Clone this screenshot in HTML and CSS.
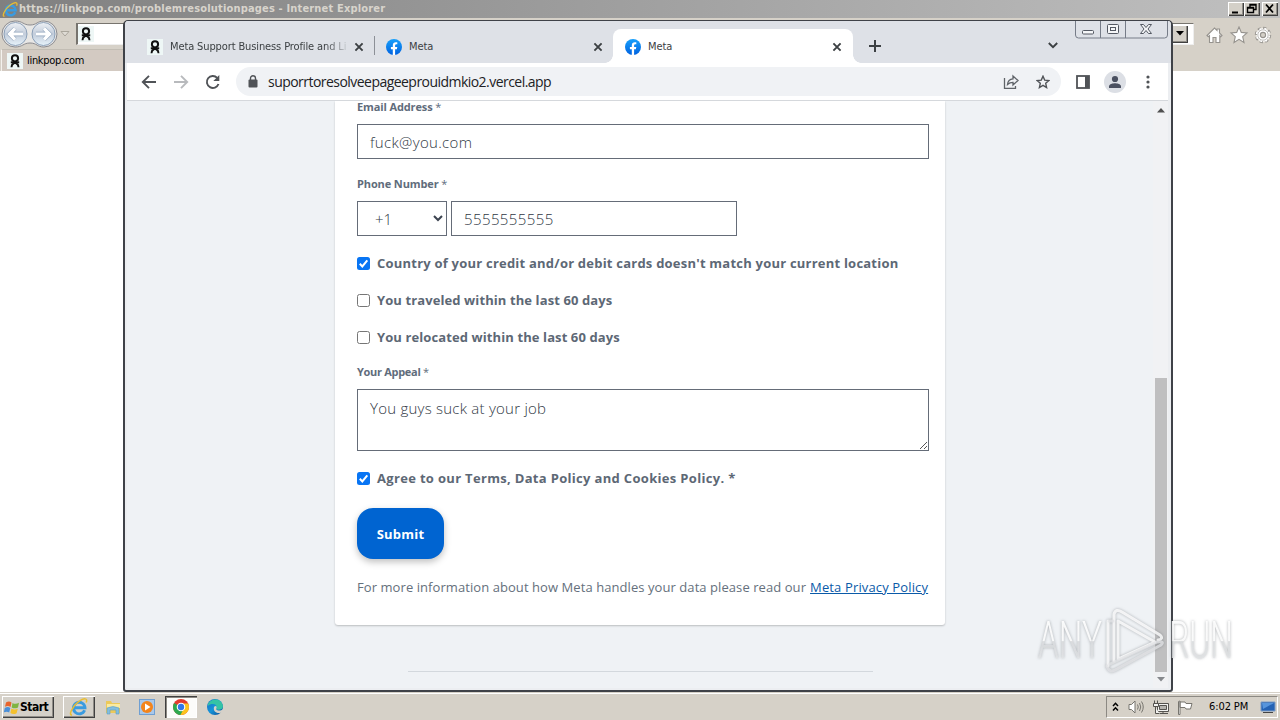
FILE: index.html
```html
<!DOCTYPE html>
<html lang="en">
<head>
<meta charset="utf-8">
<title>Desktop</title>
<link rel="stylesheet" href="styles.css">
</head>
<body>
<svg width="0" height="0" class="defs">
  <defs>
    <linearGradient id="fbg" x1="0" y1="0" x2="0" y2="1"><stop offset="0" stop-color="#18a0fb"/><stop offset="1" stop-color="#0062e0"/></linearGradient>
    <linearGradient id="orb" x1="0" y1="0" x2="0" y2="1"><stop offset="0" stop-color="#eef1f5"/><stop offset=".5" stop-color="#c3cddb"/><stop offset="1" stop-color="#e6f2fa"/></linearGradient>
    <linearGradient id="edge" x1="0" y1="0" x2="1" y2="1"><stop offset="0" stop-color="#1b6fc2"/><stop offset=".5" stop-color="#1593d8"/><stop offset="1" stop-color="#0c4a94"/></linearGradient>
    <symbol id="pop" viewBox="0 0 16 16"><rect width="16" height="16" fill="#eef7f6"/><circle cx="8" cy="5.300" r="3.100" fill="none" stroke="#111" stroke-width="2"/><path d="M3.800 9.300C7 9.300 11.500 10.300 11.500 14.300M12.200 9.300C9 9.300 4.500 10.300 4.500 14.300" fill="none" stroke="#111" stroke-width="1.900"/></symbol>
    <symbol id="fb" viewBox="0 0 16 16"><circle cx="8" cy="8" r="8" fill="url(#fbg)"/><path d="M6.800 16V10.300H4.900V8h1.900V6.500c0-2.100 1.200-3.200 3-3.200.8 0 1.500.1 1.500.1v1.900h-.9c-1 0-1.300.6-1.300 1.200V8h2.200l-.4 2.300H9.100V16z" fill="#fff"/></symbol>
    <symbol id="x" viewBox="0 0 10 10"><path d="M1.400 1.400l7.200 7.200M8.600 1.400L1.400 8.600" stroke="#3c4043" stroke-width="1.900" fill="none"/></symbol>
    <symbol id="ie" viewBox="0 0 20 20"><path d="M15.600 13.200a5.800 5.800 0 1 1 .4-2.400H5.200" fill="none" stroke="#3a9be0" stroke-width="2.900"/><path d="M3 17.800C-.5 19 2.500 10 9 5.200S19 1 17.200 5.600" fill="none" stroke="#e9bd32" stroke-width="1.500"/></symbol>
  </defs>
</svg>

<main class="ie">
  <header class="ie-title">
    <svg width="17" height="17" viewBox="0 0 20 20"><use href="#ie" width="20" height="20"/></svg>
    <span class="ie-caption">https://linkpop.com/problemresolutionpages - Internet Explorer</span>
    <div class="classic-buttons">
      <svg width="16" height="14" class="raised" viewBox="0 0 16 14"><path d="M4 10.500h6" stroke="#000" stroke-width="2"/></svg>
      <svg width="16" height="14" class="raised" viewBox="0 0 16 14"><path d="M6 5V2.500h6v5H10M3.500 5.500h6v5h-6zM3.500 6h6M6 3h6" fill="none" stroke="#000" stroke-width="1.400"/></svg>
      <svg width="16" height="14" class="raised gap" viewBox="0 0 16 14"><path d="M4 2.500l7 8M11 2.500l-7 8" stroke="#000" stroke-width="1.800"/></svg>
    </div>
  </header>
  <div class="ie-nav">
    <svg class="orbs" width="58" height="28" viewBox="0 0 58 28">
      <path d="M14 1C22 1 22 5 29 5S36 1 43 1a13 13 0 0 1 0 26C36 27 36 23 29 23S22 27 14 27A13 13 0 0 1 14 1z" fill="#e8e7e5" stroke="#8b8b90"/>
      <circle cx="14.500" cy="14" r="11.500" fill="url(#orb)" stroke="#8ca0b8"/><circle cx="42.500" cy="14" r="11.500" fill="url(#orb)" stroke="#8ca0b8"/>
      <path d="M22 14H9M14 8.500L8.500 14l5.500 5.500M35 14h13M43 8.500l5.500 5.500-5.500 5.500" fill="none" stroke="#8ea2ba" stroke-width="4.400"/>
      <path d="M22 14H9M14 8.500L8.500 14l5.500 5.500M35 14h13M43 8.500l5.500 5.500-5.500 5.500" fill="none" stroke="#fff" stroke-width="3.200"/>
    </svg>
    <svg width="10" height="6"><path d="M1 .5h8L5 5z" fill="#dfdcd5" stroke="#aaa69c"/></svg>
    <div class="ie-address"><svg width="16" height="16"><use href="#pop"/></svg><span class="drop raised"><svg width="8" height="5"><path d="M0 0h8L4 4.500z"/></svg></span></div>
    <svg class="tools" width="66" height="18" viewBox="0 0 66 18" fill="#fff" stroke="#96938e" stroke-width="1.100">
      <path d="M1 9.500L8.500 2l2.500 2.500V3h2.500v4L16 9.500l-1.200 1.200-1-1V16.500H10v-5H7v5H3.500V9.700l-1.200 1z"/>
      <path d="M33 1l2.300 5.400 5.700.5-4.300 3.800 1.300 5.800-5-3.100-5 3.100 1.300-5.800L25 6.900l5.700-.5z"/>
      <circle cx="57" cy="9" r="6.700" stroke-width="3" stroke-dasharray="3 2.260"/><circle cx="57" cy="9" r="6" stroke="#fff" stroke-width="2.600" stroke-dasharray="1.800 2.910" stroke-dashoffset="-.5"/><circle cx="57" cy="9" r="5.200" stroke="#a5a29d" stroke-width=".7"/><circle cx="57" cy="9" r="2.600" fill="#d4d0c8"/>
    </svg>
  </div>
  <div class="ie-tabs"><div class="ie-tab"><svg width="16" height="16"><use href="#pop"/></svg><span class="ie-tabname">linkpop.com</span></div></div>
  <div class="ie-page"></div>
</main>

<section class="chrome">
  <div class="strip">
    <div class="tab first"><svg class="fav" width="16" height="16"><use href="#pop"/></svg><span class="tabname fade">Meta Support Business Profile and Li</span><svg class="close" width="10" height="10"><use href="#x"/></svg></div>
    <div class="tab second"><svg class="fav" width="16" height="16"><use href="#fb"/></svg><span class="tabname">Meta</span><svg class="close" width="10" height="10"><use href="#x"/></svg></div>
    <div class="tab active"><svg class="fav" width="16" height="16"><use href="#fb"/></svg><span class="tabname">Meta</span><svg class="close" width="10" height="10"><use href="#x"/></svg></div>
    <svg class="plus" width="12" height="12"><path d="M6 0v12M0 6h12" stroke="#3c4043" stroke-width="2"/></svg>
    <svg class="chev" width="10" height="7"><path d="M.8 1L5 5.200 9.200 1" fill="none" stroke="#3c4043" stroke-width="1.900"/></svg>
  </div>
  <svg class="winbtns" width="94" height="18" viewBox="0 0 94 18" fill="none" stroke="#767c88">
    <path d="M.5 0v14q0 3 3 3h86q3 0 3-3V0M25.500 0v17M50.500 0v17"/>
    <g fill="#f5f6f8" stroke="#545963"><rect x="7.500" y="9.500" width="11" height="3.500" rx="1"/><rect x="32.500" y="3.500" width="11" height="9" rx="1"/><rect x="35.500" y="6.500" width="5" height="3"/><path d="M65.500 3.500h3l2.500 3 2.500-3h3L73 8l3.500 4.500h-3l-2.500-3-2.500 3h-3L69 8z"/></g>
  </svg>
  <div class="toolbar">
    <svg class="nav" width="82" height="16" viewBox="0 0 82 16" fill="none" stroke="#505357" stroke-width="1.900"><path d="M15 8H2M8 1.800L1.800 8 8 14.200"/><path d="M33 8h13M40 1.800L46.200 8 40 14.200" stroke="#b8babd"/><path d="M77.500 10a6 6 0 1 1-1.300-6.200"/><path d="M78.300 1v6h-6z" fill="#505357" stroke="none"/></svg>
    <div class="omnibox">
      <svg width="10" height="13" viewBox="0 0 10 13"><rect x=".5" y="4.500" width="9" height="8" rx="1" fill="#505357"/><path d="M2.500 5V3.200a2.500 2.500 0 0 1 5 0V5" fill="none" stroke="#505357" stroke-width="1.400"/></svg>
      <span class="url">suporrtoresolveepageeprouidmkio2.vercel.app</span>
      <svg class="share" width="16" height="16" viewBox="0 0 16 16" fill="none" stroke="#5f6368" stroke-width="1.300"><path d="M1.500 4v10.300h11V12"/><path d="M4.500 10.500c.3-3.700 2.300-5.500 5.500-5.700V2l5 4.500-5 4.500V8.300c-2.500 0-4 .7-5.500 2.200z"/></svg>
      <svg class="star" width="14" height="14" viewBox="0 0 14 14"><path d="M7 1.200l1.700 3.900 4.200.4-3.200 2.800.9 4.200L7 10.300l-3.600 2.200.9-4.200L1.100 5.500l4.200-.4z" fill="none" stroke="#505357" stroke-width="1.400"/></svg>
    </div>
    <svg class="panel" width="14" height="14"><rect x="1" y="1" width="12" height="12" fill="#fff" stroke="#505357" stroke-width="1.800"/><path d="M9 1h4v12H9z" fill="#505357"/></svg>
    <svg class="avatar" width="22" height="22"><circle cx="11" cy="11" r="11" fill="#dcdfe5"/><circle cx="11" cy="8" r="3.100" fill="#4a5060"/><path d="M5 17v-1.500C5 13 9 12.300 11 12.300s6 .7 6 3.200V17z" fill="#4a5060"/></svg>
    <svg class="dots" width="4" height="14" fill="#505357"><circle cx="2" cy="2" r="1.600"/><circle cx="2" cy="7" r="1.600"/><circle cx="2" cy="12" r="1.600"/></svg>
  </div>
  <div class="view">
    <div class="page">
      <form class="card">
        <div class="label l-email">Email Address <span class="ast">*</span></div>
        <div class="field"><span class="v-email">fuck@you.com</span></div>
        <div class="label l-phone">Phone Number <span class="ast">*</span></div>
        <div class="phone"><div class="field code"><span>+1</span><svg width="10" height="7"><path d="M1 1l4 4 4-4" fill="none" stroke="#3c4450" stroke-width="2"/></svg></div><div class="field number"><span class="v-phone">5555555555</span></div></div>
        <div class="check"><span class="box on"><svg width="13" height="13"><path d="M2.800 6.800l2.500 2.600 5-6" fill="none" stroke="#fff" stroke-width="2"/></svg></span><span class="c-country">Country of your credit and/or debit cards doesn't match your current location</span></div>
        <div class="check"><span class="box"></span><span class="c-travel">You traveled within the last 60 days</span></div>
        <div class="check"><span class="box"></span><span class="c-reloc">You relocated within the last 60 days</span></div>
        <div class="label l-appeal">Your Appeal <span class="ast">*</span></div>
        <div class="field area"><span class="v-appeal">You guys suck at your job</span><svg class="grip" width="9" height="9"><path d="M1 8L8 1M5 8l3-3" stroke="#555" fill="none"/></svg></div>
        <div class="check"><span class="box on"><svg width="13" height="13"><path d="M2.800 6.800l2.500 2.600 5-6" fill="none" stroke="#fff" stroke-width="2"/></svg></span><span class="c-agree">Agree to our Terms, Data Policy and Cookies Policy. *</span></div>
        <div class="submit"><span>Submit</span></div>
        <p class="more"><span class="m-text">For more information about how Meta handles your data please read our</span><a class="m-link">Meta Privacy Policy</a></p>
      </form>
      <div class="rule"></div>
    </div>
    <div class="scroll"><svg width="8" height="5"><path d="M0 4.500L4 0l4 4.500z" fill="#505050"/></svg><div class="thumb"></div><svg width="8" height="5"><path d="M0 0h8L4 4.500z" fill="#85888c"/></svg></div>
  </div>
</section>

<svg class="watermark" width="220" height="76" viewBox="0 0 220 76">
  <defs><linearGradient id="wm" x1="0" y1="0" x2="0" y2="1"><stop offset="0" stop-color="#fff" stop-opacity=".95"/><stop offset=".5" stop-color="#fff" stop-opacity=".85"/><stop offset=".52" stop-color="#dcdee0" stop-opacity=".8"/><stop offset="1" stop-color="#e6e8ea" stop-opacity=".8"/></linearGradient></defs>
  <g class="wm-shadow">
    <text x="8" y="54" textLength="64" lengthAdjust="spacingAndGlyphs" fill="url(#wm)">ANY</text>
    <text x="139" y="54" textLength="64" lengthAdjust="spacingAndGlyphs" fill="url(#wm)">RUN</text>
    <g fill="none" stroke-linejoin="round" stroke-linecap="round" stroke="#fff" stroke-opacity=".8" stroke-width="3"><path d="M88 17v38l37-17zM84 57V10q2-6 8-2l38 23q4 4-2 5M78 17v45"/><path d="M79 17h4M77 62q2 8 10 3l44-24q4-4-4-3L80 60" stroke="#e2e4e6"/></g>
  </g>
</svg>

<footer class="taskbar">
  <div class="start raised"><svg width="16" height="15" viewBox="0 0 16 15"><path d="M2 2.500q3-2 5.500 0L6.500 7Q4 5 1 6.800z" fill="#e8642c"/><path d="M8.500 3q3 1.800 6.500-.2L14 7.400q-3.500 1.800-6.300 0z" fill="#7fb441"/><path d="M.8 8q3-1.800 5.500 0L5.200 12.500Q3 11-.2 12.300z" fill="#4a8fd8"/><path d="M7.400 8.500q3 1.800 6.400.2l-1.200 4.500q-3.300 1.800-6.200-.2z" fill="#f4c12e"/></svg><span class="start-text">Start</span></div>
  <div class="task raised"><svg width="20" height="20"><use href="#ie"/></svg></div>
  <div class="task"><svg width="18" height="18" viewBox="0 0 18 18"><path d="M2 3h5l1 2h8v10H2z" fill="#ecc95a"/><path d="M3 6h13v4H3z" fill="#faeaa0"/><path d="M3 16v-6q6-3 12 0v6h-3v-4H6v4z" fill="#83bede" stroke="#5c9dc4" stroke-width=".6"/></svg></div>
  <div class="task"><svg width="17" height="17" viewBox="0 0 17 17"><rect x=".5" y=".5" width="15" height="15" fill="#a9c8ea" stroke="#6f9fd2"/><circle cx="8" cy="8" r="6" fill="#f3841c"/><path d="M6 4.500v7L11.500 8z" fill="#fff"/></svg></div>
  <div class="task sunken"><svg width="18" height="18" viewBox="0 0 18 18"><circle cx="9" cy="9" r="8" fill="#e33b2e"/><path d="M9 9L2.100 5A8 8 0 0 0 8.500 17l4-6z" fill="#2da94f"/><path d="M9 9h3.500l-4 8A8 8 0 0 0 16.200 5.500H9z" fill="#fcc31e"/><circle cx="9" cy="9" r="4.300" fill="#fff"/><circle cx="9" cy="9" r="3.200" fill="#3277e8"/></svg></div>
  <div class="task"><svg width="18" height="18" viewBox="0 0 18 18"><circle cx="9" cy="9" r="8" fill="url(#edge)"/><path d="M2 6C5 0 15-.5 17 8c0 4-5 4.500-7 3 1.500-2 .5-5-3-5-2 0-4 .5-5 2z" fill="#35c3a5"/><path d="M10 11c1.500 2.300 5 2 7 0v2l-2 1.800C10 16 7 13 8 9q.5-1 2-1c1 .8.800 2 0 3z" fill="#d6d1c8"/></svg></div>
  <div class="tray">
    <svg width="7" height="10"><path d="M1 4l2.500-2.700L6 4M1 8.500l2.500-2.700L6 8.500" fill="none" stroke="#000" stroke-width="1.500"/></svg>
    <svg class="t-sound" width="17" height="14" viewBox="0 0 17 14" fill="none" stroke="#77756f"><path d="M1 4.500h2.500L7 1v12L3.500 9.500H1z" fill="#fff"/><path d="M9.500 4.500q1.500 2.500 0 5M11.500 3q2.500 4 0 8M13.500 1.500q3.500 5.500 0 11"/></svg>
    <svg class="t-net" width="16" height="15" viewBox="0 0 16 15" fill="#f2f2f0" stroke="#55534f"><path d="M4.500 3.500h11v8h-11z"/><path d="M6.500 5.500h7v4h-7z" fill="#b5b3ae"/><path d="M7 13.500h8M10 11.500v2"/><path d="M.5 3.500h5v3h-5zM1.500 .5v3M4.500 .5v3M2.500 7v6.500h4"/></svg>
    <svg class="t-flag" width="16" height="15" viewBox="0 0 16 15" fill="#fff" stroke="#77756f"><path d="M1.500 14.500V1.500l1.500-.5v13.500zM3 2h5l1 1.500h6L13.500 9H9L8 7.500H3z"/></svg>
    <span class="clock">6:02 PM</span>
    <svg width="16" height="14" viewBox="0 0 16 14"><path d="M1 2h14v9H1z" fill="#2462b4" stroke="#7d9bc4"/><path d="M2 3h12L3 9z" fill="#5795dc"/><path d="M3 12.500h10" stroke="#444"/></svg>
  </div>
</footer>
</body>
</html>
```
FILE: styles.css
```css
* { box-sizing: border-box; }
body { margin: 0; width: 1280px; height: 720px; overflow: hidden; position: relative; display: flex; flex-direction: column; background: #fff; font-family: "Open Sans", "Noto Sans", sans-serif; }
svg { display: block; flex: none; }
span, a { white-space: nowrap; }
.defs { position: absolute; }
.raised { background: #d4d0c8; box-shadow: inset 1px 1px #fff, inset -1px -1px #404040, inset -2px -2px #908d87; }

.ie { flex: 1; display: flex; flex-direction: column; }
.ie-title { height: 18px; display: flex; align-items: center; padding: 0 2px; background: linear-gradient(90deg, #808080, #c0c0c0); }
.ie-caption { font: bold 11px/18px "DejaVu Sans Condensed", "DejaVu Sans", sans-serif; color: #d8d4cc; letter-spacing: .17px; }
.classic-buttons { margin-left: auto; display: flex; }
.classic-buttons .gap { margin-left: 2px; }
.ie-nav { height: 31px; display: flex; align-items: center; background: #d6d1c8; padding: 0 8px 0 1px; }
.orbs { margin-right: 1px; }
.ie-address { margin-left: 6px; width: 1118px; height: 22px; background: #fff; border: 1px solid #77746e; border-right-color: #eee; border-bottom-color: #eee; border-left-width: 2px; display: flex; align-items: center; padding: 0 5px 0 0; }
.drop { margin-left: auto; width: 16px; height: 18px; display: flex; align-items: center; justify-content: center; }
.tools { margin: 3px 0 0 auto; }
.ie-tabs { height: 22px; background: #d6d1c8; display: flex; }
.ie-tab { width: 200px; margin-left: 1px; border-left: 1px solid #f4f2ee; border-top: 1px solid #c2bdb4; background: #d3cac2; display: flex; align-items: center; padding-left: 5px; }
.ie-tabname { margin-left: 4px; font: 11px/14px "DejaVu Sans Condensed", sans-serif; color: #000; letter-spacing: -.3px; }
.ie-page { flex: 1; }

.chrome { position: absolute; left: 123px; top: 20px; width: 1050px; height: 672px; border: 1px solid #3f4248; border-left-width: 2px; border-right-width: 2px; border-bottom-width: 2px; border-radius: 5px 5px 3px 3px; background: #eceef1; display: flex; flex-direction: column; padding: 0 3px 2px 2px; overflow: hidden; }
.strip { flex: none; height: 42px; margin: 0 -3px 0 -2px; background: #dee1e7; display: flex; align-items: flex-end; }
.tab { height: 34px; display: flex; align-items: center; position: relative; font: 11px/16px "DejaVu Sans Condensed", sans-serif; color: #3c4043; }
.first { width: 250px; padding: 1px 11px 0 22px; }
.first::after { content: ""; position: absolute; right: 0; top: 7px; height: 19px; width: 1px; background: #8c9097; }
.second { width: 238px; padding: 1px 10px 0 11px; }
.active { width: 240px; padding: 1px 11px 0 12px; background: #fff; border-radius: 8px 8px 0 0; }
.active::before, .active::after { content: ""; position: absolute; bottom: 0; width: 8px; height: 8px; }
.active::before { left: -8px; background: radial-gradient(circle at 0 0, transparent 7.5px, #fff 8px); }
.active::after { right: -8px; background: radial-gradient(circle at 100% 0, transparent 7.5px, #fff 8px); }
.tabname { margin-left: 7px; letter-spacing: -.12px; }
.fade { width: 177px; overflow: hidden; -webkit-mask-image: linear-gradient(90deg, #000 155px, transparent 180px); mask-image: linear-gradient(90deg, #000 155px, transparent 180px); }
.close { margin-left: auto; }
.plus { margin: 0 0 11px 16px; }
.chev { margin: 0 0 14px 167px; }
.winbtns { position: absolute; left: 950px; top: 0; }
.toolbar { flex: none; height: 38px; background: #fff; border-bottom: 1px solid #d5d8dc; display: flex; align-items: center; padding-left: 14px; }
.omnibox { margin-left: 13px; width: 825px; height: 29px; border-radius: 15px; background: #f0f2f5; display: flex; align-items: center; padding: 0 11px 0 12px; }
.url { margin-left: 10px; font: 14px/20px "Open Sans", sans-serif; color: #202124; letter-spacing: -.54px; }
.share { margin-left: auto; }
.star { margin-left: 17px; }
.panel { margin-left: 15px; }
.avatar { margin-left: 14px; }
.dots { margin-left: 20px; }
.view { flex: 1; min-height: 0; display: flex; background: #eff2f5; }
.page { width: 1026px; padding-left: 208px; overflow: hidden; }
.card { width: 610px; height: 524px; padding: 0 16px 0 22px; background: #fff; box-shadow: 0 1px 2px rgba(0,0,0,.22); display: flex; flex-direction: column; border-radius: 0 0 3px 3px; }
.label { height: 16px; margin: 17px 0 9px; font-weight: 700; font-size: 11px; line-height: 16px; color: #606c7b; white-space: nowrap; flex: none; letter-spacing: -.12px; }
.l-email { margin-top: -2px; }
.l-appeal { letter-spacing: -.3px; }
.ast { font-weight: 400; }
.field { flex: none; height: 35px; border: 1px solid #656c78; background: #fff; display: flex; align-items: center; padding: 1px 12px 0; font-size: 15px; color: #303844; font-weight: 300; }
.v-email { letter-spacing: .33px; }
.v-phone { letter-spacing: .4px; }
.v-appeal { letter-spacing: .24px; }
.phone { display: flex; gap: 4px; }
.code { width: 90px; padding: 0 3px 0 17px; justify-content: space-between; }
.number { width: 286px; }
.check { flex: none; height: 20px; margin-top: 17px; display: flex; align-items: center; gap: 7px; font-weight: 700; font-size: 13px; line-height: 20px; color: #5d6875; }
.c-country { letter-spacing: .22px; }
.c-travel, .c-reloc { letter-spacing: .1px; }
.c-agree { letter-spacing: .32px; }
.box { width: 13px; height: 13px; border: 1px solid #767676; border-radius: 2.500px; background: #fff; }
.box.on { border: 0; background: #0875f4; }
.area { height: 62px; align-items: flex-start; padding-top: 8px; position: relative; }
.grip { position: absolute; right: 0; bottom: 0; }
.submit { flex: none; margin-top: 20px; width: 87px; height: 51px; border-radius: 16px; background: #0064d1; color: #fff; font-weight: 700; font-size: 13px; letter-spacing: .2px; padding-top: 1px; display: flex; align-items: center; justify-content: center; box-shadow: 0 3px 7px rgba(0,0,0,.25); }
.more { margin: 18px 0 0; height: 20px; display: flex; gap: 4px; font-size: 13px; line-height: 20px; color: #65707c; }
.m-text { letter-spacing: .07px; }
.m-link { color: #0a5aa8; text-decoration: underline; letter-spacing: .14px; }
.rule { margin: 46px 0 0 73px; width: 465px; height: 1px; background: #d3d8dd; }
.scroll { flex: 1; display: flex; flex-direction: column; align-items: center; justify-content: space-between; padding: 7px 0 6px; background: #f1f2f4; }
.thumb { width: 12px; height: 294px; margin-top: auto; margin-bottom: 5px; background: #bfbfc0; }

.watermark { position: absolute; left: 1030px; top: 604px; font: 300 51px "Roboto", sans-serif; }
.wm-shadow { filter: drop-shadow(0 0 1.500px rgba(90,95,100,.55)); }

.taskbar { height: 27px; flex: none; background: #d6d1c8; border-top: 1px solid #fff; box-shadow: 0 -1px #d6d1c8; display: flex; align-items: center; padding: 0 2px; }
.start { width: 52px; height: 22px; display: flex; align-items: center; padding-left: 2px; }
.start-text { font: bold 12px/16px "DejaVu Sans Condensed", sans-serif; color: #000; letter-spacing: -.5px; }
.task { width: 32px; height: 22px; margin-right: 2px; display: flex; align-items: center; justify-content: center; }
.start + .task { margin-left: 9px; }
.sunken { background: #fcfcfa; box-shadow: inset 1px 1px #404040, inset 2px 2px #8c8983, inset -1px -1px #fff; }
.tray { margin-left: auto; width: 172px; height: 22px; border: 1px solid #8c8983; border-right-color: #fff; border-bottom-color: #fff; display: flex; align-items: center; padding: 0 1px 0 5px; }
.t-sound { margin-left: 9px; }
.t-net { margin-left: 8px; }
.t-flag { margin-left: 8px; }
.clock { margin: 0 auto 0 16px; font: 11px/14px "DejaVu Sans Condensed", sans-serif; color: #000; letter-spacing: -.1px; }
```
